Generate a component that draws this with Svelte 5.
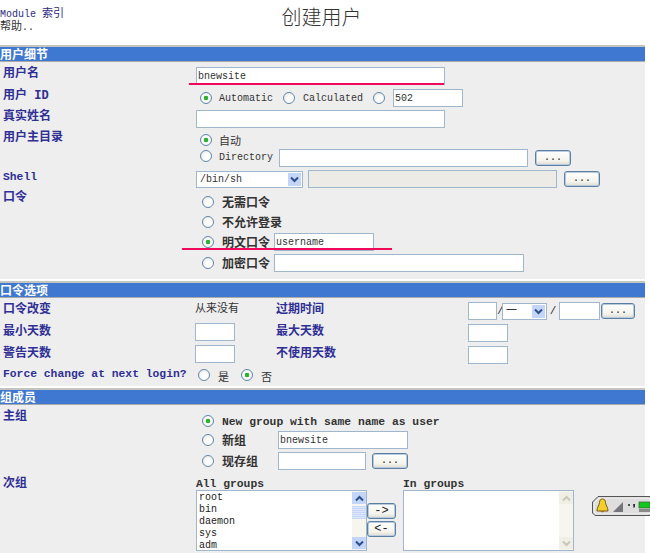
<script>
  const allGroups = ['root', 'bin', 'daemon', 'sys', 'adm'];
</script>

<div class="page">
  <header class="top">
    <div class="links">
      <div>Module <span class="cjk">索引</span></div>
      <div><span class="cjk">帮助</span>..</div>
    </div>
    <h1>创建用户</h1>
  </header>

  <section class="panel first">
    <div class="bar">用户细节</div>
    <div class="body b1">
      <div class="row h22">
        <div class="label">用户名</div>
        <div class="field"><input class="text w249" value="bnewsite" /></div>
      </div>
      <div class="row h21">
        <div class="label">用户 ID</div>
        <div class="field">
          <span class="radio on ml4"></span><span class="opt ml7">Automatic</span>
          <span class="radio ml10"></span><span class="opt ml8">Calculated</span>
          <span class="radio ml10"></span>
          <input class="text w70 ml8" value="502" />
        </div>
      </div>
      <div class="row h21">
        <div class="label">真实姓名</div>
        <div class="field"><input class="text w249" /></div>
      </div>
      <div class="row h39">
        <div class="label">用户主目录</div>
        <div class="stack">
          <div class="line h18 pt2"><span class="radio on ml4"></span><span class="opt cjk ml7">自动</span></div>
          <div class="line h19">
            <span class="radio ml4 up"></span><span class="opt ml7">Directory</span>
            <input class="text w249 ml6" />
            <button class="btn ml7">...</button>
          </div>
        </div>
      </div>
      <div class="row h21">
        <div class="label en">Shell</div>
        <div class="field">
          <div class="select w107"><span>/bin/sh</span><i class="arrow"><svg width="9" height="7" viewBox="0 0 9 7"><path d="M1 1.500l3.500 3.500L8 1.500" fill="none" stroke="#2d4f8f" stroke-width="2"/></svg></i></div>
          <input class="text w249 ml5 off" disabled />
          <button class="btn ml7">...</button>
        </div>
      </div>
      <div class="row h84">
        <div class="label">口令</div>
        <div class="stack pt2">
          <div class="line h20 in12"><span class="radio"></span><b class="opt">无需口令</b></div>
          <div class="line h20 in12"><span class="radio"></span><b class="opt">不允许登录</b></div>
          <div class="line h20 in12"><span class="radio on"></span><b class="opt">明文口令</b><input class="text w100" value="username" /></div>
          <div class="line h22 in12"><span class="radio"></span><b class="opt">加密口令</b><input class="text w250" /></div>
        </div>
      </div>
    </div>
  </section>

  <section class="panel">
    <div class="bar">口令选项</div>
    <div class="body b2">
      <div class="row4 h22">
        <div class="label">口令改变</div>
        <div class="plain never">从来没有</div>
        <div class="label l0">过期时间</div>
        <div class="field">
          <input class="text w29" /><span class="slash">/</span>
          <div class="select w45"><span class="cjk">一</span><i class="arrow"><svg width="9" height="7" viewBox="0 0 9 7"><path d="M1 1.500l3.500 3.500L8 1.500" fill="none" stroke="#2d4f8f" stroke-width="2"/></svg></i></div>
          <span class="slash wide">/</span><input class="text w41" /><button class="btn ml1 w34">...</button>
        </div>
      </div>
      <div class="row4 h22">
        <div class="label">最小天数</div>
        <div class="plain"><input class="text w40" /></div>
        <div class="label l0">最大天数</div>
        <div class="field"><input class="text w40" /></div>
      </div>
      <div class="row4 h21">
        <div class="label">警告天数</div>
        <div class="plain"><input class="text w40" /></div>
        <div class="label l0">不使用天数</div>
        <div class="field"><input class="text w40" /></div>
      </div>
      <div class="force">
        <div class="label en">Force change at next login?</div>
        <span class="radio"></span><span class="opt cjk ml8">是</span>
        <span class="radio on ml12"></span><span class="opt cjk ml8">否</span>
      </div>
    </div>
  </section>

  <section class="panel">
    <div class="bar">组成员</div>
    <div class="body b3">
      <div class="row h67">
        <div class="label">主组</div>
        <div class="stack pt2">
          <div class="line h19 in12"><span class="radio on"></span><b class="opt en">New group with same name as user</b></div>
          <div class="line h20 in12"><span class="radio"></span><b class="opt">新组</b><input class="text w130 ml4" value="bnewsite" /></div>
          <div class="line h21 in12"><span class="radio"></span><b class="opt">现存组</b><input class="text w88 ml4" /><button class="btn ml6">...</button></div>
        </div>
      </div>
      <div class="row">
        <div class="label">次组</div>
        <div class="lists">
          <div class="col">
            <div class="cap">All groups</div>
            <div class="list">
              <div class="items">
                {#each allGroups as g}<div>{g}</div>{/each}
              </div>
              <div class="scroll">
                <span class="sbtn"><svg width="9" height="7" viewBox="0 0 9 7"><path d="M1 5.500L4.500 2 8 5.500" fill="none" stroke="#2d4f8f" stroke-width="2"/></svg></span>
                <span class="thumb"></span>
                <span class="sbtn end"><svg width="9" height="7" viewBox="0 0 9 7"><path d="M1 1.500l3.500 3.500L8 1.500" fill="none" stroke="#2d4f8f" stroke-width="2"/></svg></span>
              </div>
            </div>
          </div>
          <div class="moves">
            <button class="btn mv">-&gt;</button>
            <button class="btn mv">&lt;-</button>
          </div>
          <div class="col">
            <div class="cap">In groups</div>
            <div class="list">
              <div class="items"></div>
              <div class="scroll idle">
                <span class="sbtn"><svg width="9" height="7" viewBox="0 0 9 7"><path d="M1 5.500L4.500 2 8 5.500" fill="none" stroke="#c9c7ba" stroke-width="2"/></svg></span>
                <span class="sbtn end"><svg width="9" height="7" viewBox="0 0 9 7"><path d="M1 1.500l3.500 3.500L8 1.500" fill="none" stroke="#c9c7ba" stroke-width="2"/></svg></span>
              </div>
            </div>
          </div>
        </div>
      </div>
    </div>
  </section>

  <!-- hand-drawn annotations on the screenshot -->
  <div class="mark m1"></div>
  <div class="mark m2"></div>

  <!-- desktop tray widget that overlaps the page -->
  <div class="tray">
    <svg width="58" height="20" viewBox="0 0 58 20">
      <path d="M6 .5H58V19.500H3L.5 17V6z" fill="#cfcfcf" stroke="#555"/>
      <path d="M7 2H58V18H4L2 16V7z" fill="#dedede" stroke="#f4f4f4"/>
      <path d="M10.500 3c2.200 0 3 1.600 3 3.500 0 2.500 2.500 4.500 2.500 8.500H5c0-4 2.500-6 2.500-8.500C7.500 4.600 8.300 3 10.500 3z" fill="#f2cf2b" stroke="#7a5c10" stroke-width="1"/>
      <path d="M8 15h5l-2.500 1.500z" fill="#a8681a"/>
      <path d="M21 16L31 6V16z" fill="#74767a"/>
      <circle cx="37" cy="9" r="1.100" fill="#333"/>
      <path d="M41 8h2v3l-1.500 1z" fill="#333"/>
      <rect x="47" y="6" width="11" height="6" fill="#12c81c" stroke="#3b5a3b" stroke-width=".7"/>
      <rect x="47" y="13" width="11" height="3" fill="#8a8a8a"/>
    </svg>
  </div>
</div>

<style>
  :global(body) {
    margin: 0;
    background: #fff;
  }

  .page {
    position: relative;
    width: 650px;
    height: 553px;
    overflow: hidden;
    font-family: "Liberation Mono", "Noto Sans CJK SC", monospace;
    font-size: 10px;
    color: #333;
  }

  .cjk {
    font-size: 11px;
  }

  .top {
    position: relative;
    height: 45px;
  }

  .links {
    padding-top: 8px;
    line-height: 12px;
    color: #2a2a80;
  }

  .links div + div {
    color: #333;
  }

  h1 {
    position: absolute;
    top: 3px;
    left: 0;
    width: 643px;
    margin: 0;
    text-align: center;
    font-family: "Noto Sans CJK SC", sans-serif;
    font-weight: 300;
    font-size: 20px;
    line-height: 28px;
    color: #333;
  }

  .panel {
    width: 645px;
    background: #eee;
    border-top: 2px solid #c4c4c0;
    margin-top: 2px;
  }

  .panel.first {
    margin-top: 0;
  }

  .bar {
    height: 14px;
    line-height: 14px;
    background: #3f78d0;
    color: #fff;
    font-family: "Noto Sans CJK SC", sans-serif;
    font-weight: 700;
    font-size: 12px;
    border-bottom: 1px solid #aaa;
  }

  .body {
    overflow: hidden;
  }

  .b1 {
    padding-top: 4px;
    height: 213px;
  }

  .b2 {
    padding-top: 3px;
    height: 85px;
  }

  .b2 .label {
    padding-top: 2px;
  }

  .b3 {
    padding-top: 4px;
    height: 150px;
  }

  .row {
    display: grid;
    grid-template-columns: 196px 1fr;
  }

  .row4 {
    display: grid;
    grid-template-columns: 195px 81px 192px 1fr;
  }

  .force {
    display: flex;
    align-items: flex-start;
    height: 20px;
  }

  .force .radio {
    margin-top: 3px;
  }

  .force .opt {
    margin-top: 2px;
  }

  .force .label.en {
    padding-top: 1px;
    width: 198px;
    box-sizing: border-box;
  }

  .h84 { height: 84px; }
  .h67 { height: 67px; }
  .h39 { height: 39px; }
  .h22 { height: 22px; }
  .h21 { height: 21px; }
  .h20 { height: 20px; }
  .h19 { height: 19px; }
  .h18 { height: 18px; }
  .pt2 { padding-top: 2px; box-sizing: border-box; }

  .label {
    padding: 1px 0 0 3px;
    font-family: "Liberation Mono", "Noto Sans CJK SC", monospace;
    font-weight: 700;
    font-size: 12px;
    line-height: 14px;
    color: #2f2f96;
  }

  .label.l0 {
    padding-left: 0;
  }

  .label.en {
    font-size: 11.33px;
  }

  .field,
  .line {
    display: flex;
    align-items: center;
  }

  .field {
    align-self: start;
    height: 20px;
  }

  .stack {
    display: flex;
    flex-direction: column;
  }

  .in12 {
    padding-left: 6px;
  }

  .plain {
    font-family: "Noto Sans CJK SC", sans-serif;
    font-size: 11px;
    line-height: 14px;
  }

  .plain.never {
    margin-top: -1px;
  }

  .opt {
    white-space: nowrap;
    font-size: 10px;
  }

  .opt.cjk {
    font-size: 11px;
  }

  b.opt {
    font-size: 12px;
    color: #333;
    width: 52px;
    margin-left: 8px;
  }

  b.opt.en {
    width: auto;
    padding-top: 2px;
    font-size: 11.33px;
  }

  .radio {
    flex: none;
    width: 12px;
    height: 12px;
    box-sizing: border-box;
    border: 1px solid #5f86ad;
    border-radius: 50%;
    background: radial-gradient(circle at 65% 65%, #fff 30%, #e6e4da 100%);
  }

  .radio.up {
    margin-top: -4px;
  }

  .radio.on {
    background: radial-gradient(circle, #30b030 0 2px, #dff2df 2.500px, #fff 3px, #e6e4da 100%);
  }

  .text {
    box-sizing: border-box;
    height: 18px;
    margin: 0;
    padding: 0 1px;
    border: 1px solid #9fb6cc;
    border-radius: 0;
    background: #fff;
    font-family: inherit;
    font-size: 10px;
    color: #333;
    outline: none;
  }

  .text.off {
    background: #ecebe5;
  }

  .w250 { width: 250px; }
  .w249 { width: 249px; }
  .w130 { width: 130px; }
  .w100 { width: 100px; }
  .w88 { width: 88px; }
  .w70 { width: 70px; }
  .w41 { width: 41px; }
  .w40 { width: 40px; }
  .w29 { width: 29px; }

  .ml1 { margin-left: 1px; }
  .ml4 { margin-left: 4px; }
  .ml5 { margin-left: 5px; }
  .ml6 { margin-left: 6px; }
  .ml7 { margin-left: 7px; }
  .ml8 { margin-left: 8px; }
  .ml10 { margin-left: 10px; }
  .ml12 { margin-left: 12px; }

  .btn {
    flex: none;
    width: 36px;
    height: 16px;
    padding: 0;
    box-sizing: border-box;
    border: 1px solid #5a7fa3;
    box-shadow: inset 0 0 0 1px #b9cbdc;
    border-radius: 3px;
    background: linear-gradient(#fff, #f4f3ec 70%, #dcdad0);
    font-family: inherit;
    font-size: 10px;
    line-height: 12px;
    color: #222;
  }

  .btn.w34 {
    width: 34px;
  }

  .select {
    position: relative;
    box-sizing: border-box;
    height: 17px;
    border: 1px solid #9fb6cc;
    background: #fff;
    font-size: 10px;
    line-height: 15px;
    padding-left: 3px;
  }

  .w107 { width: 107px; }
  .w45 { width: 45px; }

  .arrow {
    position: absolute;
    top: 1px;
    right: 1px;
    display: flex;
    width: 13px;
    height: 13px;
    align-items: center;
    justify-content: center;
    background: #c3d5f8;
  }

  .slash {
    width: 5px;
    text-align: center;
    font-size: 11px;
  }

  .slash.wide {
    width: 12px;
  }

  .lists {
    display: flex;
    align-items: flex-start;
  }

  .col {
    display: flex;
    flex-direction: column;
  }

  .cap {
    margin-top: 1px;
    font-weight: 700;
    font-size: 11.33px;
    line-height: 14px;
    height: 13px;
    color: #333;
  }

  .list {
    display: flex;
    box-sizing: border-box;
    width: 171px;
    height: 61px;
    border: 1px solid #9fb6cc;
    background: #fff;
  }

  .items {
    flex: 1;
    padding: 1px 0 0 2px;
    line-height: 12px;
    font-size: 10px;
    color: #222;
  }

  .scroll {
    display: flex;
    flex-direction: column;
    width: 14px;
    padding: 1px 0;
    background: #f6f6ef;
  }

  .sbtn {
    display: flex;
    height: 12px;
    align-items: center;
    justify-content: center;
    background: #c3d5f8;
  }

  .sbtn.end {
    margin-top: auto;
  }

  .thumb {
    height: 13px;
    margin-top: 2px;
    background: repeating-linear-gradient(#c6d7f7 0 1px, #dbe6fb 1px 2px);
  }

  .idle .sbtn {
    background: #f0efe6;
  }

  .moves {
    display: flex;
    flex-direction: column;
    gap: 2px;
    width: 36px;
    padding-top: 27px;
  }

  .btn.mv {
    width: 29px;
    font-size: 12px;
  }

  .mark {
    position: absolute;
    height: 2px;
    background: #f0085a;
  }

  .m1 {
    left: 189px;
    top: 83px;
    width: 255px;
  }

  .m2 {
    left: 182px;
    top: 248px;
    width: 210px;
  }

  .tray {
    position: absolute;
    left: 592px;
    top: 496px;
    width: 58px;
    height: 20px;
  }
</style>
